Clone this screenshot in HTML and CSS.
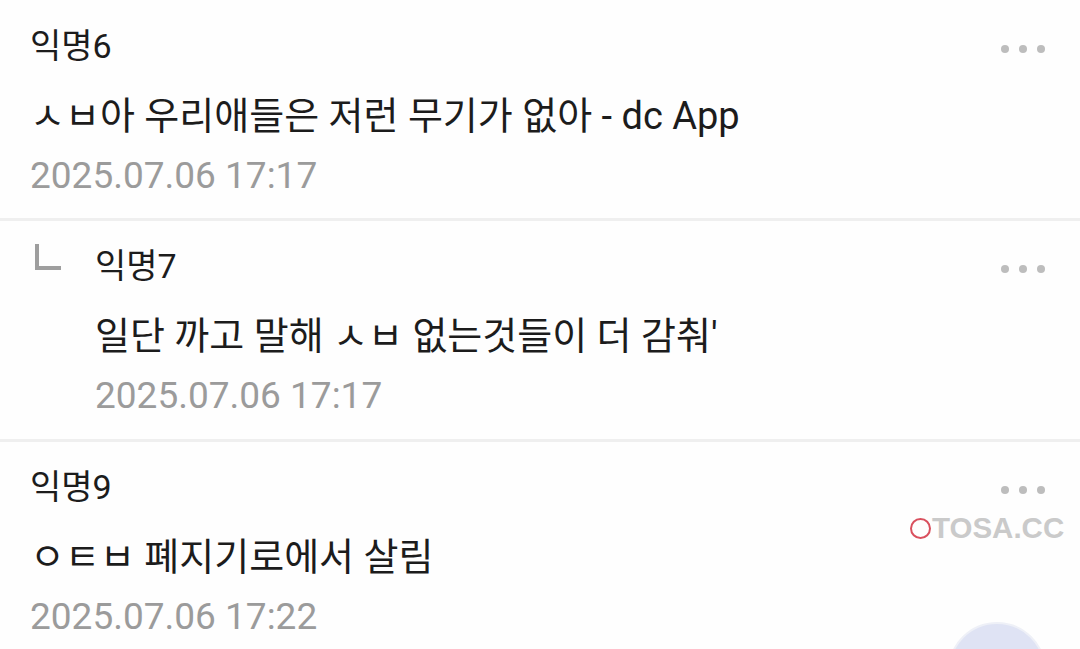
FILE: index.html
```html
<!DOCTYPE html>
<html lang="ko">
<head>
    <meta charset="UTF-8">
    <meta name="viewport" content="width=device-width, initial-scale=1.0">
    <title>댓글</title>
    <link rel="stylesheet" href="styles.css">
</head>
<body>
    <ul class="comment-list">
        <li class="comment">
            <div class="comment-main">
                <p class="comment-name">익명6</p>
                <p class="comment-text">ㅅㅂ아 우리애들은 저런 무기가 없아 - dc App</p>
                <p class="comment-date">2025.07.06 17:17</p>
            </div>
            <div class="comment-more"><span></span><span></span><span></span></div>
        </li>
        <li class="comment reply">
            <div class="reply-mark"><span></span></div>
            <div class="comment-main">
                <p class="comment-name">익명7</p>
                <p class="comment-text">일단 까고 말해 ㅅㅂ 없는것들이 더 감춰'</p>
                <p class="comment-date">2025.07.06 17:17</p>
            </div>
            <div class="comment-more"><span></span><span></span><span></span></div>
        </li>
        <li class="comment">
            <div class="comment-main">
                <p class="comment-name">익명9</p>
                <p class="comment-text">ㅇㅌㅂ 폐지기로에서 살림</p>
                <p class="comment-date">2025.07.06 17:22</p>
            </div>
            <div class="comment-more"><span></span><span></span><span></span></div>
        </li>
    </ul>

    <div class="watermark"><span class="watermark-ring"></span>TOSA.CC</div>
    <div class="fab"></div>
</body>
</html>
```

FILE: styles.css
```css
:root{
    --text : #1c1c1c;
    --date : #9b9b9b;
    --divider : #efefef;
    --dots : #bdbdbd;
}

*{
    padding: 0;
    margin: 0;
    box-sizing: border-box;
}

ul{
    list-style: none;
}

html, body{
    height: 100%;
    overflow: hidden;
}

body{
    background: #fefefe;
    font-family: Roboto, "Noto Sans CJK KR", sans-serif;
    color: var(--text);
    position: relative;
}

.comment{
    display: flex;
    align-items: flex-start;
    padding: 18px 30px 24px 30px;
    border-bottom: 3px solid var(--divider);
}

.comment + .comment{
    padding-top: 17px;
    padding-bottom: 25px;
}

.comment-main{
    flex: 1;
}

.comment-name{
    font-size: 34px;
    line-height: 56px;
}

.comment-text{
    font-size: 38px;
    line-height: 84px;
    white-space: nowrap;
}

.comment-date{
    font-size: 37px;
    line-height: 36px;
    color: var(--date);
}

.comment-more{
    display: flex;
    gap: 10px;
    padding-top: 27px;
    margin-right: 5px;
}

.comment-more span{
    width: 8px;
    height: 8px;
    border-radius: 50%;
    background: var(--dots);
}

.reply-mark{
    width: 65px;
    padding: 6px 0 0 5px;
}

.reply-mark span{
    display: block;
    width: 26px;
    height: 26px;
    border-left: 4px solid #9e9e9e;
    border-bottom: 4px solid #9e9e9e;
}

.watermark{
    position: absolute;
    left: 910px;
    top: 512px;
    display: flex;
    align-items: center;
    gap: 1px;
    font-family: "Liberation Sans", Arial, sans-serif;
    font-weight: bold;
    font-size: 29.5px;
    line-height: 32px;
    color: #cacaca;
}

.watermark-ring{
    width: 21px;
    height: 21px;
    border: 2px solid #d9505e;
    border-radius: 50%;
}

.fab{
    position: absolute;
    left: 948px;
    top: 622px;
    width: 98px;
    height: 98px;
    border-radius: 50%;
    background: #dfe3f4;
    border: 2px solid #eef0f7;
}
```
